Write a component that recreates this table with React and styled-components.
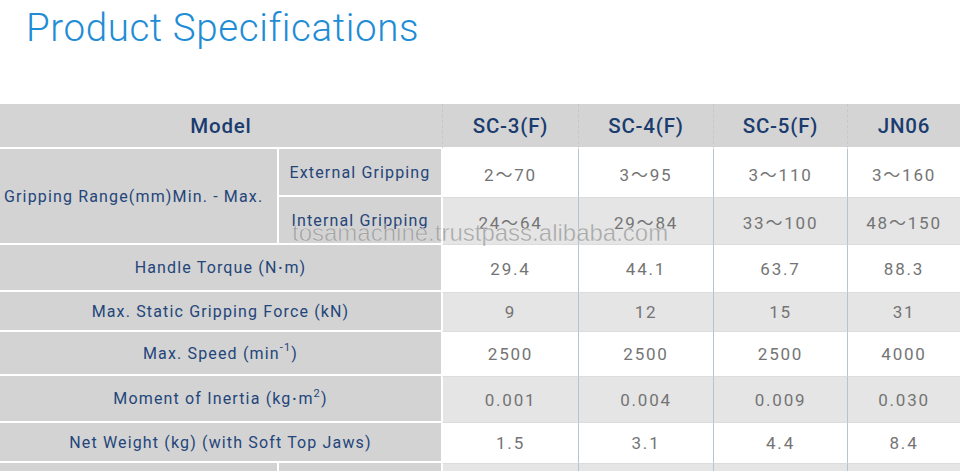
import React from 'react';
import styled, { createGlobalStyle } from 'styled-components';

const GlobalStyle = createGlobalStyle`
  html, body {
    margin: 0;
    padding: 0;
    background: #fff;
  }
  body {
    font-family: Roboto, "Noto Sans", "Noto Sans CJK JP", sans-serif;
    overflow: hidden;
  }
`;

const Page = styled.div`
  width: 960px;
  height: 471px;
  overflow: hidden;
`;

const Title = styled.h1`
  margin: 0;
  height: 104px;
  box-sizing: border-box;
  padding: 5px 0 0 26px;
  font-family: Roboto, sans-serif;
  font-weight: 300;
  font-size: 38.5px;
  letter-spacing: 0.6px;
  color: #1f8dd6;
`;

const Wrap = styled.div`
  position: relative;
`;

const Table = styled.div`
  display: grid;
  grid-template-columns: 277px 165px 136px 135px 134px 113px;
  grid-template-rows: 45px 48px 48px 47px 40px 44px 47px 40px 40px;
`;

const Head = styled.div`
  grid-column: ${p => p.span ? `span ${p.span}` : 'auto'};
  display: flex;
  align-items: center;
  justify-content: center;
  background: #d4d4d4;
  border-bottom: 2px solid #fff;
  border-left: ${p => p.first ? 'none' : '1px dashed #c4c8cc'};
  font-weight: 500;
  font-size: 20.5px;
  letter-spacing: 0.8px;
  color: #1b3c6f;
  padding-top: 1px;
`;

const Label = styled.div`
  grid-column: ${p => p.span ? `span ${p.span}` : 'auto'};
  grid-row: ${p => p.rows ? `span ${p.rows}` : 'auto'};
  display: flex;
  align-items: center;
  justify-content: ${p => p.left ? 'flex-start' : 'center'};
  padding-left: ${p => p.left ? '4px' : '0'};
  background: #d3d3d3;
  border-bottom: 2px solid #fff;
  border-left: ${p => p.sub ? '2px solid #fff' : 'none'};
  border-right: ${p => p.edge ? '1px solid #fff' : 'none'};
  font-size: 16px;
  letter-spacing: 1.15px;
  color: #24457a;
  white-space: nowrap;
`;

const LabelText = styled.span`
  sup {
    font-size: 11px;
    line-height: 0;
    position: relative;
    top: -1px;
  }
`;

const Dot = styled.span`
  font-size: 11px;
  margin: 0 1px;
  vertical-align: 1px;
`;

const Data = styled.div`
  display: flex;
  align-items: center;
  justify-content: center;
  background: ${p => p.shade ? '#e5e5e5' : '#fff'};
  border-top: ${p => p.shade ? '1px solid #dcdcdc' : 'none'};
  border-bottom: ${p => p.shade ? '1px solid #dcdcdc' : 'none'};
  border-left: ${p => p.first ? '1px solid #fff' : '1px solid #b6c3d0'};
  font-size: 17px;
  letter-spacing: 1.8px;
  color: #747474;
  white-space: nowrap;
`;

const Watermark = styled.div`
  position: absolute;
  left: 292px;
  top: 115px;
  font-family: "Liberation Sans", Arial, sans-serif;
  font-size: 24px;
  color: rgba(150, 150, 150, 0.75);
  -webkit-text-stroke: 0.4px rgba(255, 255, 255, 0.6);
  pointer-events: none;
  white-space: nowrap;
`;

const models = ['SC-3(F)', 'SC-4(F)', 'SC-5(F)', 'JN06'];

const rows = [
  { label: <>Handle Torque (N<Dot>•</Dot>m)</>, values: ['29.4', '44.1', '63.7', '88.3'] },
  { label: 'Max. Static Gripping Force (kN)', values: ['9', '12', '15', '31'] },
  { label: <>Max. Speed (min<sup>-1</sup>)</>, values: ['2500', '2500', '2500', '4000'] },
  { label: <>Moment of Inertia (kg<Dot>•</Dot>m<sup>2</sup>)</>, values: ['0.001', '0.004', '0.009', '0.030'] },
  { label: 'Net Weight (kg) (with Soft Top Jaws)', values: ['1.5', '3.1', '4.4', '8.4'] },
];

const external = ['2\u301c70', '3\u301c95', '3\u301c110', '3\u301c160'];
const internal = ['24\u301c64', '29\u301c84', '33\u301c100', '48\u301c150'];

const App = () => {
  return (
    <>
      <GlobalStyle />
      <Page>
        <Title>Product Specifications</Title>
        <Wrap>
          <Table>
            <Head span={2} first>Model</Head>
            {models.map(m => <Head key={m}>{m}</Head>)}

            <Label rows={2} left>Gripping Range(mm)Min. - Max.</Label>
            <Label sub edge>External Gripping</Label>
            {external.map((v, i) => <Data key={v} first={i === 0}>{v}</Data>)}
            <Label sub edge>Internal Gripping</Label>
            {internal.map((v, i) => <Data key={v} first={i === 0} shade>{v}</Data>)}

            {rows.map((r, ri) => (
              <React.Fragment key={ri}>
                <Label span={2} edge><LabelText>{r.label}</LabelText></Label>
                {r.values.map((v, i) => (
                  <Data key={i} first={i === 0} shade={ri % 2 === 1}>{v}</Data>
                ))}
              </React.Fragment>
            ))}

            <Label />
            <Label sub edge />
            {models.map((m, i) => <Data key={m} first={i === 0} shade />)}
          </Table>
          <Watermark>tosamachine.trustpass.alibaba.com</Watermark>
        </Wrap>
      </Page>
    </>
  );
};

export default App;
